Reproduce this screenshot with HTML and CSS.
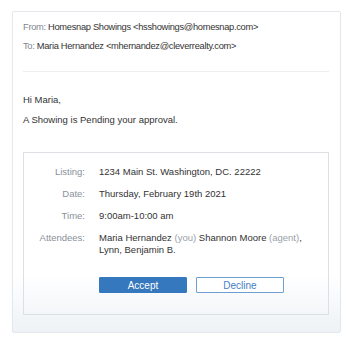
FILE: index.html
```html
<!DOCTYPE html>
<html lang="en">
<head>
<meta charset="UTF-8" />
<meta name="viewport" content="width=device-width, initial-scale=1.0" />
<title>Showing Request</title>
<link rel="stylesheet" href="styles.css">
</head>
<body>

<!-- ───── EMAIL CARD ───── -->
<div class="card">
  <div class="head">
    <div><span class="muted">From:</span> Homesnap Showings &lt;hsshowings@homesnap.com&gt;</div>
    <div><span class="muted">To:</span> Maria Hernandez &lt;mhernandez@cleverrealty.com&gt;</div>
  </div>
  <hr class="rule">

  <p class="line">Hi Maria,</p>
  <p class="line">A Showing is Pending your approval.</p>

  <!-- ───── SHOWING DETAILS ───── -->
  <div class="details">
    <div class="grid">
      <div class="lbl">Listing:</div>
      <div class="val">1234 Main St. Washington, DC. 22222</div>
      <div class="lbl">Date:</div>
      <div class="val">Thursday, February 19th 2021</div>
      <div class="lbl">Time:</div>
      <div class="val">9:00am-10:00 am</div>
      <div class="lbl">Attendees:</div>
      <div class="val"><span class="nowrap">Maria Hernandez <span class="note">(you)</span> Shannon Moore <span class="note">(agent)</span>,</span><br>Lynn, Benjamin B.</div>
    </div>
    <div class="actions">
      <button class="btn accept">Accept</button>
      <button class="btn decline">Decline</button>
    </div>
  </div>
</div>

</body>
</html>
```

FILE: styles.css
```css
/* ───── RESET ───── */
*{margin:0;padding:0;box-sizing:border-box}

body{
  background:#fff;color:#333;
  font-family:"Liberation Sans",Arial,sans-serif;font-size:9.5px;
}

/* ───── CARD ───── */
.card{
  width:329px;height:322px;margin:11px 0 0 12px;
  padding:6px 11px 0 10px;
  border:1px solid #e4e7eb;border-radius:2px;
  background:linear-gradient(to bottom,#fff 0,#fff 82%,#eef2f6 100%);
  box-shadow:0 1px 2px rgba(0,0,0,.04);
}
.head div{line-height:19px}
.head{font-size:9.3px;letter-spacing:-.3px}
.muted{color:#7f8690}
.rule{border:none;border-top:1px solid #eceef1;margin:15px 0 18px}
.line{line-height:20px}

/* ───── DETAILS BOX ───── */
.details{
  margin-top:22px;padding:13px 10px 21px 0;
  border:1px solid #dcdfe4;
}
.grid{
  display:grid;grid-template-columns:61px 1fr;
  column-gap:14px;row-gap:10px;line-height:12px;
}
.lbl{text-align:right;color:#8a909a}
.note{color:#9aa0a8}
.nowrap{white-space:nowrap}

/* buttons */
.actions{display:flex;gap:9px;margin:21px 0 0 75px}
.btn{
  width:88px;height:16px;font:inherit;font-size:10px;
  border-radius:1px;cursor:pointer;
}
.accept{background:#3578bd;color:#fff;border:1px solid #3578bd}
.decline{background:#fff;color:#3f80c4;border:1px solid #6d9fd3}
```
